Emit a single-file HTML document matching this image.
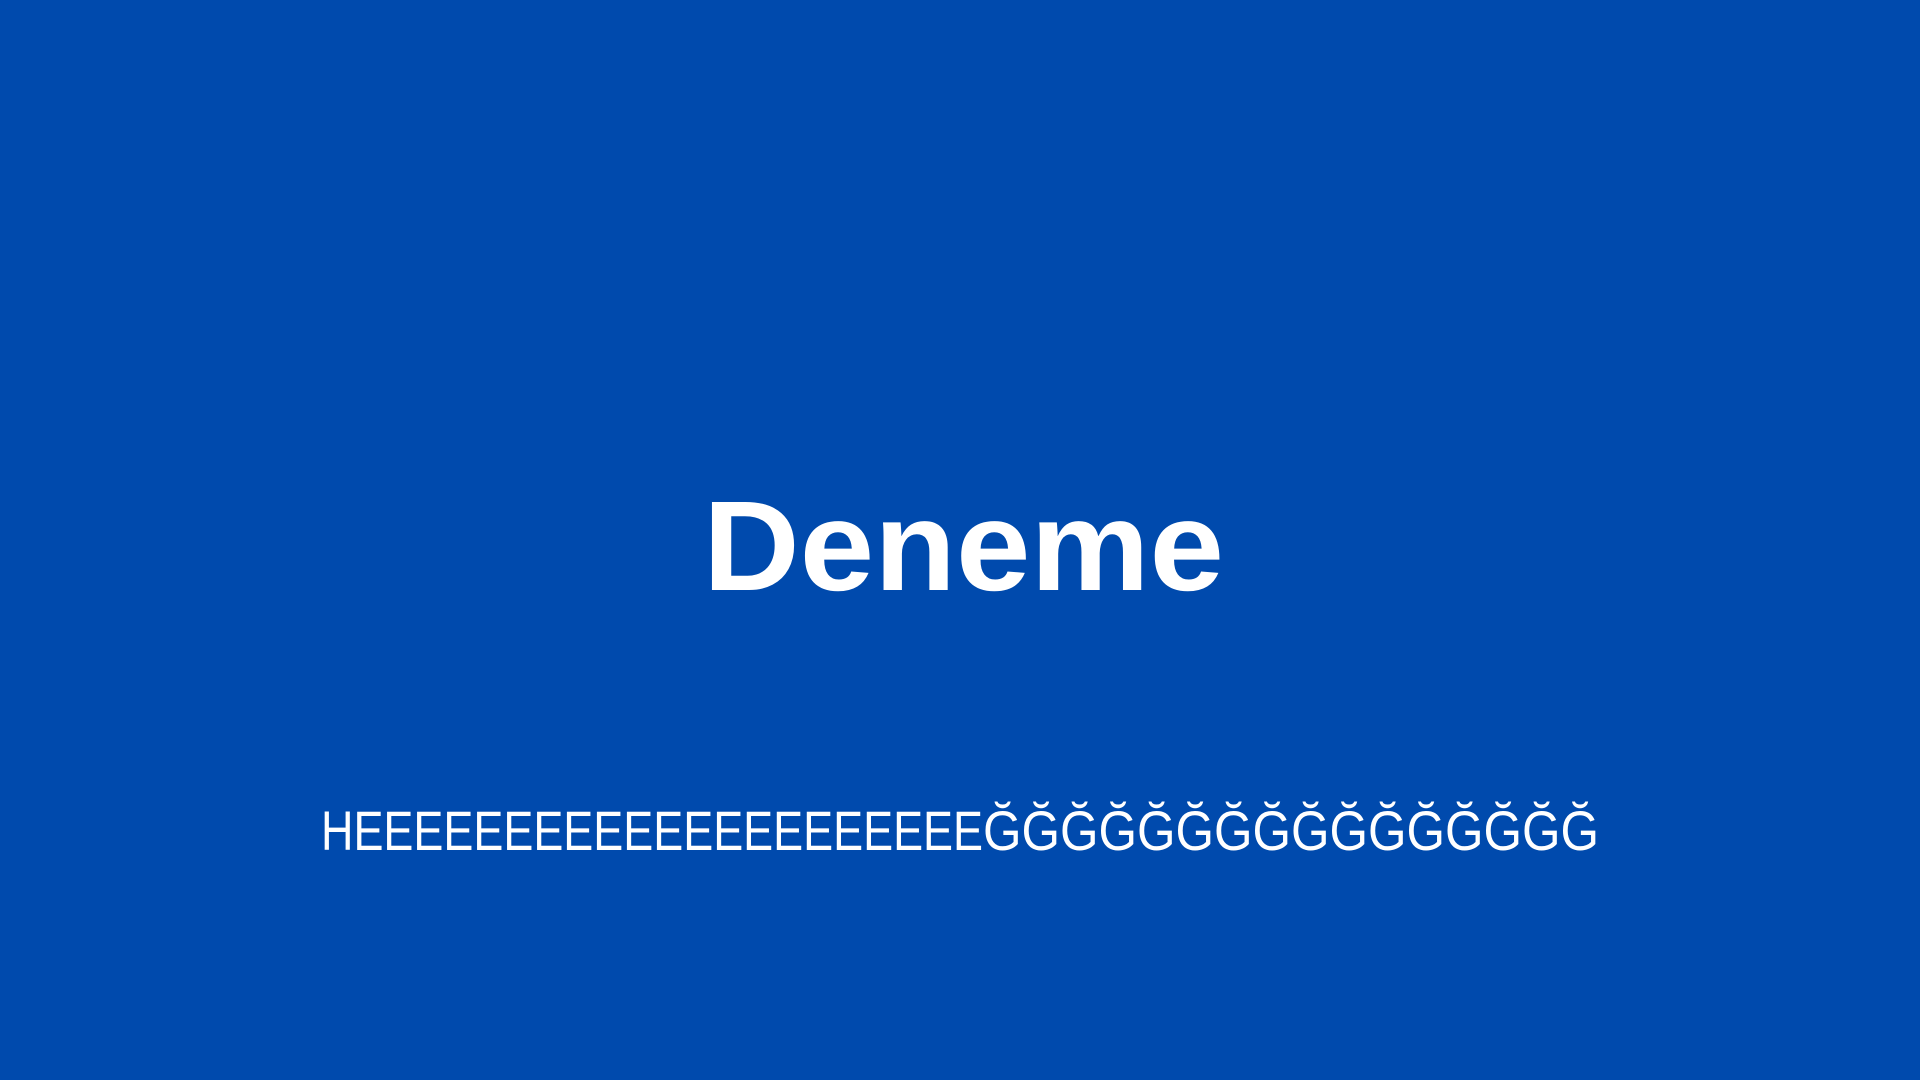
<!DOCTYPE html>
<html>
<head>
<meta charset="utf-8">
<style>
html,body{margin:0;padding:0;width:1920px;height:1080px;overflow:hidden;background:#004AAD;}
svg{display:block;}
</style>
</head>
<body>
<svg width="1920" height="1080" viewBox="0 0 1920 1080" xmlns="http://www.w3.org/2000/svg">
<rect width="1920" height="1080" fill="#004AAD"/>
<text x="703" y="590" font-family="'Liberation Sans', sans-serif" font-weight="bold" font-size="128" fill="#fff" textLength="521" lengthAdjust="spacingAndGlyphs">Deneme</text>
<text x="321" y="850" font-family="'Liberation Sans', sans-serif" font-size="56" fill="#fff" textLength="662" lengthAdjust="spacingAndGlyphs">HEEEEEEEEEEEEEEEEEEEEE</text>
<text x="983" y="850" font-family="'Liberation Sans', sans-serif" font-size="56" fill="#fff" textLength="616" lengthAdjust="spacingAndGlyphs">ĞĞĞĞĞĞĞĞĞĞĞĞĞĞĞĞ</text>
</svg>
</body>
</html>
